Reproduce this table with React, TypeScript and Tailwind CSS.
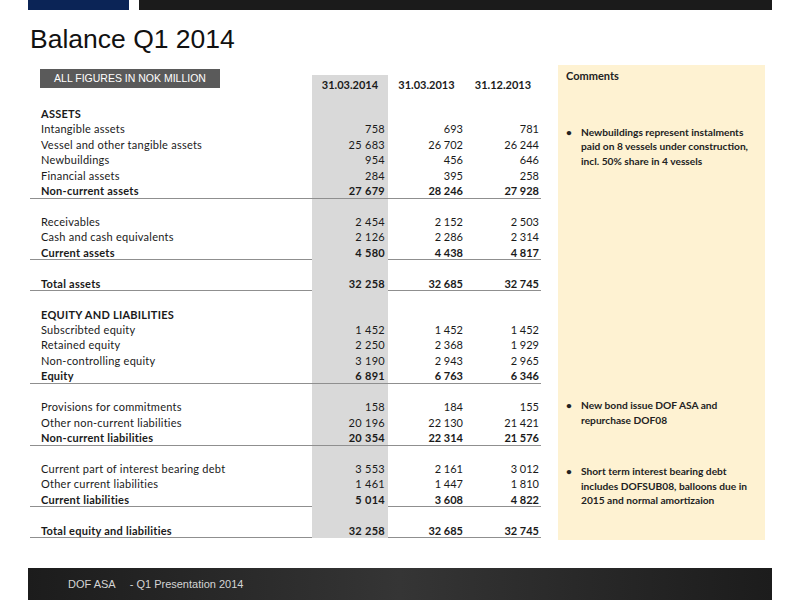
type Row = { label?: string; v?: [string, string, string]; kind?: "head" | "item" | "total" | "blank" };

const rows: Row[] = [
  { label: "ASSETS", kind: "head" },
  { label: "Intangible assets", v: ["758", "693", "781"] },
  { label: "Vessel and other tangible assets", v: ["25 683", "26 702", "26 244"] },
  { label: "Newbuildings", v: ["954", "456", "646"] },
  { label: "Financial assets", v: ["284", "395", "258"] },
  { label: "Non-current assets", v: ["27 679", "28 246", "27 928"], kind: "total" },
  { kind: "blank" },
  { label: "Receivables", v: ["2 454", "2 152", "2 503"] },
  { label: "Cash and cash equivalents", v: ["2 126", "2 286", "2 314"] },
  { label: "Current assets", v: ["4 580", "4 438", "4 817"], kind: "total" },
  { kind: "blank" },
  { label: "Total assets", v: ["32 258", "32 685", "32 745"], kind: "total" },
  { kind: "blank" },
  { label: "EQUITY AND LIABILITIES", kind: "head" },
  { label: "Subscribted equity", v: ["1 452", "1 452", "1 452"] },
  { label: "Retained equity", v: ["2 250", "2 368", "1 929"] },
  { label: "Non-controlling equity", v: ["3 190", "2 943", "2 965"] },
  { label: "Equity", v: ["6 891", "6 763", "6 346"], kind: "total" },
  { kind: "blank" },
  { label: "Provisions for commitments", v: ["158", "184", "155"] },
  { label: "Other non-current liabilities", v: ["20 196", "22 130", "21 421"] },
  { label: "Non-current liabilities", v: ["20 354", "22 314", "21 576"], kind: "total" },
  { kind: "blank" },
  { label: "Current part of interest bearing debt", v: ["3 553", "2 161", "3 012"] },
  { label: "Other current liabilities", v: ["1 461", "1 447", "1 810"] },
  { label: "Current liabilities", v: ["5 014", "3 608", "4 822"], kind: "total" },
  { kind: "blank" },
  { label: "Total equity and liabilities", v: ["32 258", "32 685", "32 745"], kind: "total" },
];

function TableRow({ row }: { row: Row }) {
  const bold = row.kind === "head" || row.kind === "total";
  return (
    <div
      className={
        "grid grid-cols-[282px_76px_77px_76px] h-[15.44px] leading-[15px] " +
        (row.kind === "total" ? "border-b-[1.5px] border-[#8f8f8f] " : "") +
        (bold ? "font-bold" : "")
      }
    >
      <div className="pl-[11px] whitespace-nowrap tracking-[0.25px]">{row.label}</div>
      <div className="bg-[#d9d9d9] text-right pr-[3px] tracking-[0.3px]">{row.v?.[0]}</div>
      <div className="text-right pr-[2px]">{row.v?.[1]}</div>
      <div className="text-right pr-[2px]">{row.v?.[2]}</div>
    </div>
  );
}

function Bullet({ children }: { children: React.ReactNode }) {
  return (
    <li className="flex">
      <span className="w-[15px] shrink-0">•</span>
      <span className="whitespace-nowrap">{children}</span>
    </li>
  );
}

export default function App() {
  return (
    <div className="w-[800px] h-[600px] bg-white overflow-hidden font-['Lato',sans-serif] text-[#1a1a1a]">
      <div className="flex h-[10px]">
        <div className="ml-[28px] w-[101px] bg-[#0b2456]" />
        <div className="ml-[10px] w-[633px] bg-[#1b1b1b]" />
      </div>

      <h1 className="mt-[14px] pl-[30px] text-[26.5px] leading-[30px] font-['Liberation_Sans',Arial,sans-serif] text-[#111]">
        Balance Q1 2014
      </h1>

      <div className="mt-[11px] flex">
        <div className="ml-[30px] w-[511px] pt-[10px] text-[11px]">
          <div className="grid grid-cols-[282px_76px_77px_76px] h-[15.44px] font-bold">
            <div className="pl-[10px]">
              <div className="-mt-[6px] w-[180px] h-[19px] bg-[#5a5a5a] text-white text-center text-[10.5px] leading-[19px] font-['Liberation_Sans',Arial,sans-serif] font-normal">
                ALL FIGURES IN NOK MILLION
              </div>
            </div>
            <div className="bg-[#d9d9d9] text-center pt-[2px] leading-[15px]">31.03.2014</div>
            <div className="text-center pt-[2px] leading-[15px]">31.03.2013</div>
            <div className="text-center pt-[2px] leading-[15px]">31.12.2013</div>
          </div>
          <div className="grid grid-cols-[282px_76px_77px_76px] h-[15.44px]">
            <div />
            <div className="bg-[#d9d9d9]" />
          </div>
          {rows.map((r, i) => (
            <TableRow key={i} row={r} />
          ))}
        </div>

        <div className="ml-[17px] w-[207px] h-[475px] bg-[#fef2d2] px-[8px] pt-[4px] text-[10.2px] leading-[14.5px] font-bold text-[#222]">
          <div className="text-[11px]">Comments</div>
          <ul className="mt-[41px]">
            <Bullet>
              Newbuildings represent instalments
              <br />
              paid on 8 vessels under construction,
              <br />
              incl. 50% share in 4 vessels
            </Bullet>
          </ul>
          <ul className="mt-[230px]">
            <Bullet>
              New bond issue DOF ASA and
              <br />
              repurchase DOF08
            </Bullet>
          </ul>
          <ul className="mt-[37px]">
            <Bullet>
              Short term interest bearing debt
              <br />
              includes DOFSUB08, balloons due in
              <br />
              2015 and normal amortizaion
            </Bullet>
          </ul>
        </div>
      </div>

      <div className="mt-[28px] ml-[28px] w-[744px] h-[32px] bg-gradient-to-r from-[#1c1c1c] via-[#353535] to-[#1c1c1c] flex items-center text-[11px] text-[#d4d4d4] font-['Liberation_Sans',Arial,sans-serif]">
        <span className="ml-[40px]">DOF ASA</span>
        <span className="ml-[14px]">- Q1 Presentation 2014</span>
      </div>
    </div>
  );
}
